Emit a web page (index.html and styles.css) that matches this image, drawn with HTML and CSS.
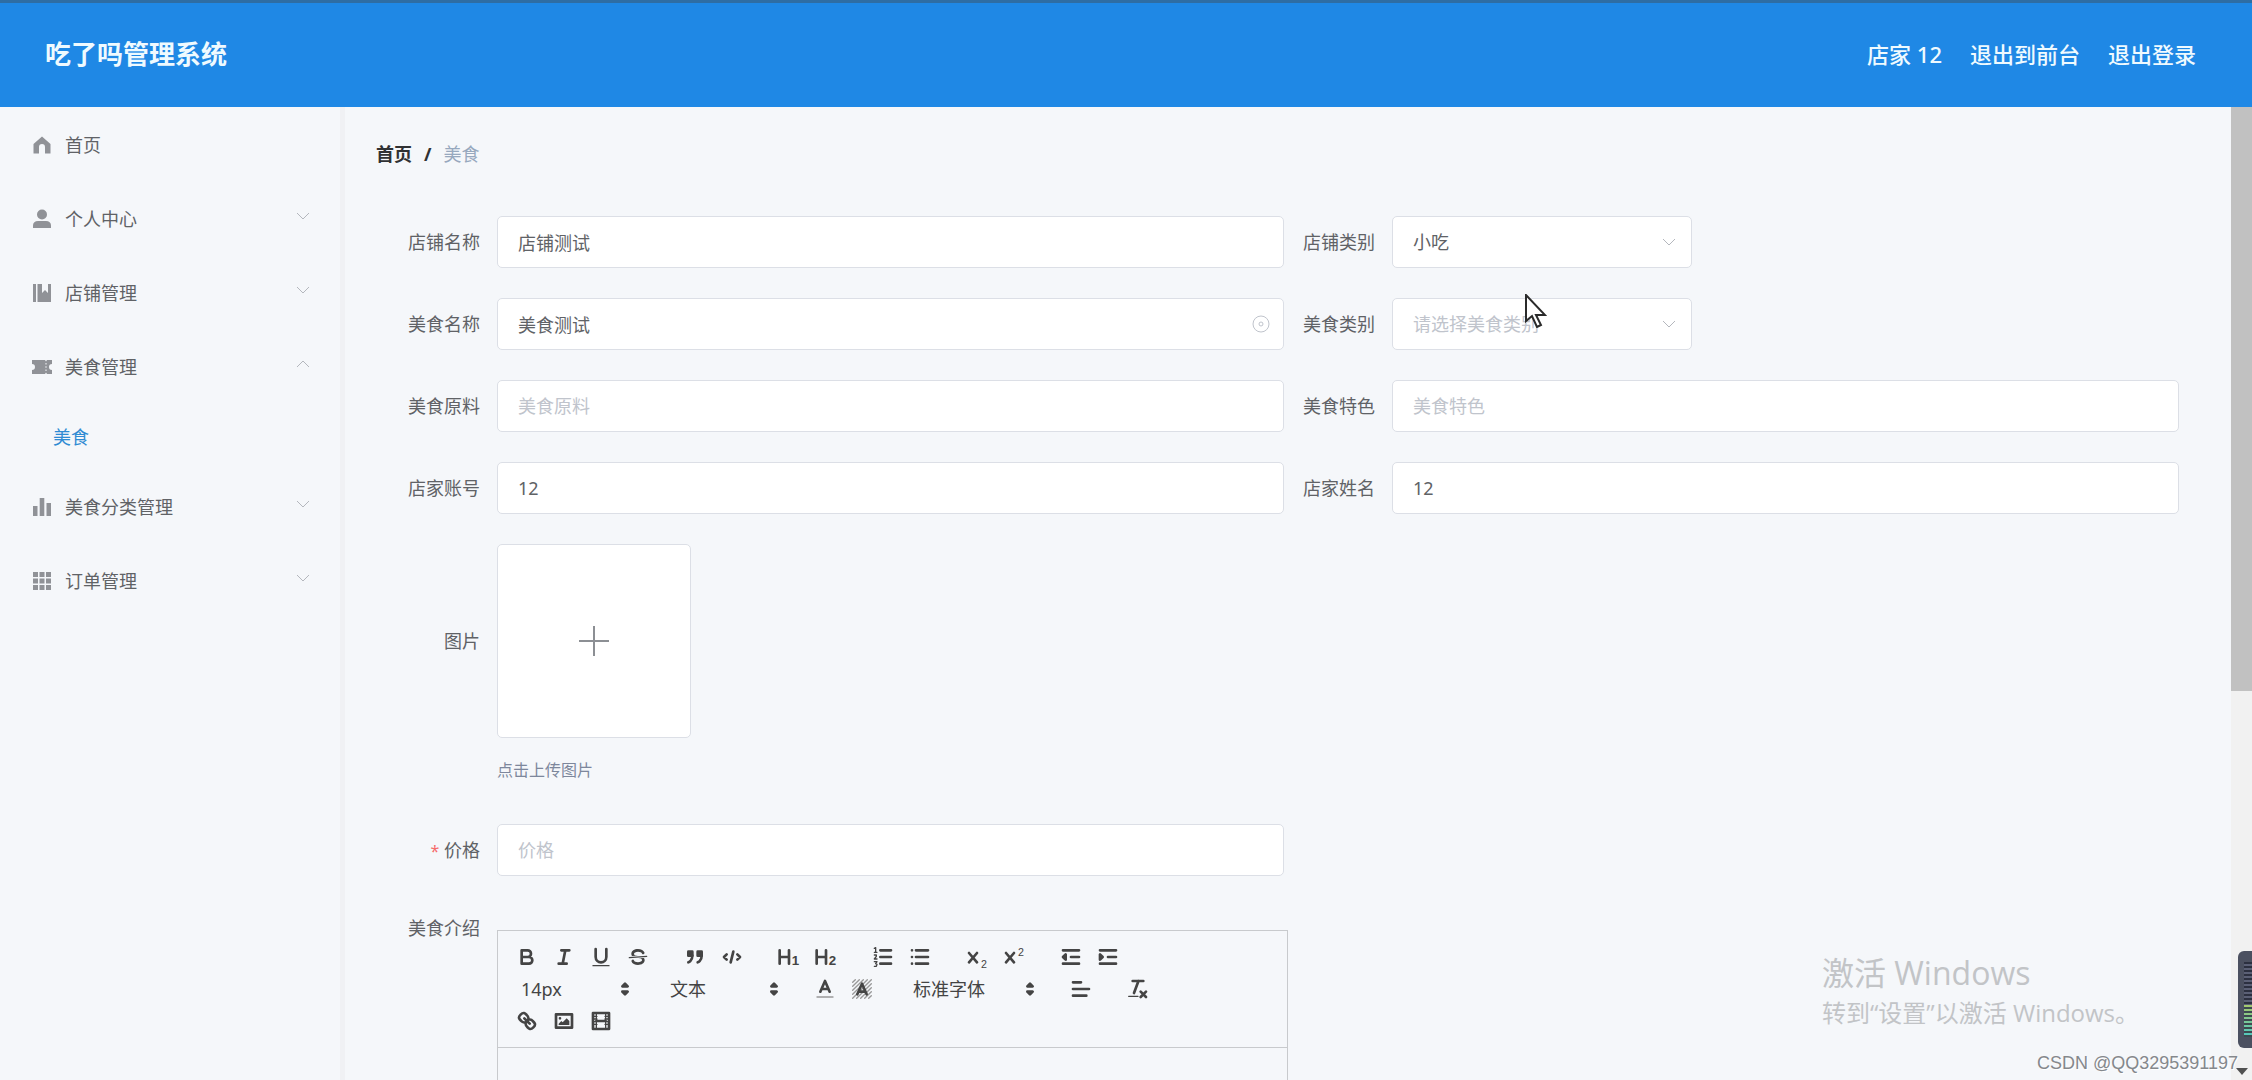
FILE: index.html
```html
<!DOCTYPE html>
<html lang="zh-CN">
<head>
<meta charset="utf-8">
<title>吃了吗管理系统</title>
<link rel="stylesheet" href="styles.css">
</head>
<body>
<header class="topbar">
  <h1 class="brand">吃了吗管理系统</h1>
  <nav class="topnav">
    <span>店家 12</span>
    <a href="#front">退出到前台</a>
    <a href="#logout">退出登录</a>
  </nav>
</header>

<div class="body">
  <aside class="sidebar">
    <ul class="menu">
      <li><a class="item" href="#home">
        <svg class="icon" viewBox="0 0 20 20"><path d="M10 1.500 18.500 9v9.500h-5.500V12a3 3 0 0 0-6 0v6.500H1.500V9z"/></svg>
        <span class="name">首页</span></a></li>
      <li><a class="item" href="#user">
        <svg class="icon" viewBox="0 0 20 20"><ellipse cx="10" cy="5.500" rx="5" ry="5"/><path d="M1 19v-2.500c0-3 2-4.500 5-4.500h8c3 0 5 1.500 5 4.500V19z"/></svg>
        <span class="name">个人中心</span>
        <svg class="arrow" viewBox="0 0 14 14"><path d="M1 4l6 6 6-6"/></svg></a></li>
      <li><a class="item" href="#shop">
        <svg class="icon" viewBox="0 0 20 20"><path d="M1 1h3v18H1zM5.500 1H10v9l3-3 3 3V1h3v18H5.500z"/></svg>
        <span class="name">店铺管理</span>
        <svg class="arrow" viewBox="0 0 14 14"><path d="M1 4l6 6 6-6"/></svg></a></li>
      <li><a class="item" href="#food">
        <svg class="icon" viewBox="0 0 20 20"><path d="M0 3h13l1 1.500L15 3h5v4a3 3 0 0 0 0 6v4h-5l-1-1.500L13 17H0v-4a3 3 0 0 0 0-6z"/><path class="cut" d="M14 6v1.500M14 9.200v1.600M14 12.500V14"/></svg>
        <span class="name">美食管理</span>
        <svg class="arrow" viewBox="0 0 14 14"><path d="M1 10l6-6 6 6"/></svg></a>
        <a class="subitem" href="#food-list">美食</a></li>
      <li><a class="item" href="#category">
        <svg class="icon" viewBox="0 0 20 20"><path d="M1 9h4.500v10H1zM7.700 1h4.600v18H7.700zM14.500 6H19v13h-4.500z"/></svg>
        <span class="name">美食分类管理</span>
        <svg class="arrow" viewBox="0 0 14 14"><path d="M1 4l6 6 6-6"/></svg></a></li>
      <li><a class="item" href="#orders">
        <svg class="icon" viewBox="0 0 20 20"><path d="M1 1h5v5H1zM7.500 1h5v5h-5zM14 1h5v5h-5zM1 7.500h5v5H1zM7.500 7.500h5v5h-5zM14 7.500h5v5h-5zM1 14h5v5H1zM7.500 14h5v5h-5zM14 14h5v5h-5z"/></svg>
        <span class="name">订单管理</span>
        <svg class="arrow" viewBox="0 0 14 14"><path d="M1 4l6 6 6-6"/></svg></a></li>
    </ul>
  </aside>

  <main class="main">
    <nav class="crumbs"><a href="#home">首页</a><span class="slash">/</span><span class="current">美食</span></nav>

    <form class="form">
      <div class="field">
        <label for="shop-name">店铺名称</label>
        <input class="control" id="shop-name" type="text" value="店铺测试">
      </div>
      <div class="field">
        <label for="shop-type">店铺类别</label>
        <div class="select">
          <select class="control" id="shop-type"><option>小吃</option></select>
          <svg class="arrow" viewBox="0 0 14 14"><path d="M1 4l6 6 6-6"/></svg>
        </div>
      </div>

      <div class="field">
        <label for="food-name">美食名称</label>
        <div class="clearable">
          <input class="control" id="food-name" type="text" value="美食测试">
          <svg class="clear" viewBox="0 0 18 18"><circle cx="9" cy="9" r="8"/><circle cx="9" cy="9" r="2"/></svg>
        </div>
      </div>
      <div class="field">
        <label for="food-type">美食类别</label>
        <div class="select">
          <select class="control empty" id="food-type"><option>请选择美食类别</option></select>
          <svg class="arrow" viewBox="0 0 14 14"><path d="M1 4l6 6 6-6"/></svg>
          <svg class="pointer" viewBox="0 0 22 34"><path d="M1 1v26l6-5 5 11 4-2-5-10h9z"/></svg>
        </div>
      </div>

      <div class="field">
        <label for="material">美食原料</label>
        <input class="control" id="material" type="text" placeholder="美食原料">
      </div>
      <div class="field">
        <label for="feature">美食特色</label>
        <input class="control" id="feature" type="text" placeholder="美食特色">
      </div>

      <div class="field">
        <label for="account">店家账号</label>
        <input class="control" id="account" type="text" value="12">
      </div>
      <div class="field">
        <label for="owner">店家姓名</label>
        <input class="control" id="owner" type="text" value="12">
      </div>

      <div class="field wide">
        <label class="tall" for="upload">图片</label>
        <div class="upload">
          <button class="upload-box" id="upload" type="button" aria-label="上传图片">
            <svg viewBox="0 0 32 32"><path d="M16 1v30M1 16h30"/></svg>
          </button>
          <p class="hint">点击上传图片</p>
        </div>
      </div>

      <div class="field first-column">
        <label for="price"><span class="required">*</span> 价格</label>
        <input class="control" id="price" type="text" placeholder="价格">
      </div>

      <div class="field first-column">
        <label class="short" id="intro-label">美食介绍</label>
        <div class="editor">
          <div class="toolbar">
            <div class="group">
              <button type="button" aria-label="加粗"><svg viewBox="0 0 18 18"><path d="M5 4h4.500a2.500 2.500 0 0 1 0 5H5zM5 9h5.500a2.500 2.500 0 0 1 0 5H5z"/></svg></button>
              <button type="button" aria-label="斜体"><svg viewBox="0 0 18 18"><path d="M7 4h6M5 14h6M8 14l2-10"/></svg></button>
              <button type="button" aria-label="下划线"><svg viewBox="0 0 18 18"><path d="M5 3v6a4 4 0 0 0 8 0V3"/><path class="thin" d="M3 15.500h12"/></svg></button>
              <button type="button" aria-label="删除线"><svg viewBox="0 0 18 18"><path class="thin" d="M15.500 8.500l-13 1"/><path class="solid" d="M9.007 8C6.542 7.791 6 7.519 6 6.500 6 5.792 7.283 5 9 5c1.571 0 2.765.679 2.969 1.309a1 1 0 0 0 1.900-.617C13.356 4.106 11.354 3 9 3 6.200 3 4 4.538 4 6.500a3.200 3.200 0 0 0 .5 1.843zM8.984 10C11.457 10.208 12 10.479 12 11.500c0 .708-1.283 1.500-3 1.500-1.571 0-2.765-.679-2.969-1.309a1 1 0 1 0-1.900.617C4.644 13.894 6.646 15 9 15c2.800 0 5-1.538 5-3.500a3.200 3.200 0 0 0-.5-1.843z"/></svg></button>
            </div>
            <div class="group">
              <button type="button" aria-label="引用"><svg viewBox="0 0 18 18"><g class="both"><path d="M4 5h3v3H4zM11 5h3v3h-3z"/><path d="M7 8c0 4.031-3 5-3 5M14 8c0 4.031-3 5-3 5"/></g></svg></button>
              <button type="button" aria-label="代码"><svg viewBox="0 0 18 18"><path d="M5 7L3 9l2 2M13 7l2 2-2 2M10 5L8 13"/></svg></button>
            </div>
            <div class="group">
              <button type="button" aria-label="标题一"><svg viewBox="0 0 18 18"><path d="M2 4v10M9 4v10M2 9h7"/><text x="11" y="15" font-size="10">1</text></svg></button>
              <button type="button" aria-label="标题二"><svg viewBox="0 0 18 18"><path d="M2 4v10M9 4v10M2 9h7"/><text x="11" y="15" font-size="10">2</text></svg></button>
            </div>
            <div class="group">
              <button type="button" aria-label="有序列表"><svg viewBox="0 0 18 18"><path d="M7 4h8M7 9h8M7 14h8"/><path class="thin" d="M2.500 2.500l1-.5v3.500M2.500 5.500h2M2.500 7.500h1.500v1l-1.500 2h2M2.500 12.500h2l-1 1.500 1 .5-.5 1.500h-1.500"/></svg></button>
              <button type="button" aria-label="无序列表"><svg viewBox="0 0 18 18"><path d="M6 4h9M6 9h9M6 14h9M3 4h0M3 9h0M3 14h0"/></svg></button>
            </div>
            <div class="group">
              <button type="button" aria-label="下标"><svg viewBox="0 0 18 18"><path d="M3 6l6 7M9 6l-6 7"/><text class="light" x="12" y="17" font-size="8">2</text></svg></button>
              <button type="button" aria-label="上标"><svg viewBox="0 0 18 18"><path d="M3 6l6 7M9 6l-6 7"/><text class="light" x="12" y="8" font-size="8">2</text></svg></button>
            </div>
            <div class="group">
              <button type="button" aria-label="减少缩进"><svg viewBox="0 0 18 18"><path d="M3 4h12M3 14h12M9 9h6"/><path class="both" d="M5 7v4L3 9z"/></svg></button>
              <button type="button" aria-label="增加缩进"><svg viewBox="0 0 18 18"><path d="M3 4h12M3 14h12M9 9h6"/><path class="both" d="M3 7v4l2-2z"/></svg></button>
            </div>
            <div class="group picker">
              <select aria-label="字号"><option>14px</option></select>
              <svg viewBox="0 0 18 18"><path class="both" d="M7 11l2 2 2-2zM7 7l2-2 2 2z"/></svg>
            </div>
            <div class="group picker">
              <select aria-label="段落"><option>文本</option></select>
              <svg viewBox="0 0 18 18"><path class="both" d="M7 11l2 2 2-2zM7 7l2-2 2 2z"/></svg>
            </div>
            <div class="group">
              <button type="button" aria-label="文字颜色"><svg viewBox="0 0 18 18"><path d="M5.500 11L9 3l3.500 8M6.400 9h5.200"/><path class="thin pale" d="M3 15h12"/></svg></button>
              <button type="button" aria-label="背景颜色"><svg viewBox="0 0 18 18"><path class="thin pale" d="M2 4l2-2M2 7l5-5M2 10l8-8M2 13l11-11M2 16l14-14M5 16l11-11M8 16l8-8M11 16l5-5M14 16l2-2"/><path d="M5.500 13L9 5l3.500 8M6.400 11h5.200"/></svg></button>
            </div>
            <div class="group picker font">
              <select aria-label="字体"><option>标准字体</option></select>
              <svg viewBox="0 0 18 18"><path class="both" d="M7 11l2 2 2-2zM7 7l2-2 2 2z"/></svg>
            </div>
            <div class="group">
              <button type="button" aria-label="对齐"><svg viewBox="0 0 18 18"><path d="M3 4h6M3 9h12M3 14h10"/></svg></button>
            </div>
            <div class="group">
              <button type="button" aria-label="清除格式"><svg viewBox="0 0 18 18"><path d="M5 3h8M6 12l3.350-9M11 11l4 4M15 11l-4 4"/><path class="thin" d="M2 14.500h7"/></svg></button>
            </div>
            <div class="group">
              <button type="button" aria-label="链接"><svg viewBox="0 0 18 18"><path d="M7 7l4 4M8.900 4.577a3.476 3.476 0 0 1 .36 4.679A3.476 3.476 0 0 1 4.577 8.900C3.185 7.500 2.035 6.400 4.217 4.217S7.500 3.185 8.900 4.577zM13.423 9.100a3.476 3.476 0 0 0-4.679-.36 3.476 3.476 0 0 0 .36 4.679c1.392 1.392 2.500 2.542 4.679.36S14.815 10.500 13.423 9.100z"/></svg></button>
              <button type="button" aria-label="图片"><svg viewBox="0 0 18 18"><path d="M3 4h12v10H3z"/><path class="solid" d="M5 12v-1l2-2 1 1 3-3 2 2v3zM5 7a1 1 0 1 1 2 0 1 1 0 0 1-2 0z"/></svg></button>
              <button type="button" aria-label="视频"><svg viewBox="0 0 18 18"><path d="M3 3h12v12H3z"/><path class="thin" d="M5.500 3v12M12.500 3v12M5 8.500h8M5 9.500h8M3 5.500h3M3 7.500h3M3 9.500h3M3 11.500h3M12 5.500h3M12 7.500h3M12 9.500h3M12 11.500h3"/></svg></button>
            </div>
          </div>
          <div class="content" contenteditable="true" role="textbox" aria-labelledby="intro-label"></div>
        </div>
      </div>
    </form>
  </main>

  <div class="scrollbar">
    <div class="thumb"></div>
    <svg class="down" viewBox="0 0 12 7"><path d="M0 0h12L6 7z"/></svg>
  </div>
</div>

<div class="activate">
  <p class="activate-title">激活 Windows</p>
  <p class="activate-text">转到“设置”以激活 Windows。</p>
</div>
<div class="meter"><div class="meter-idle"></div><div class="meter-level"></div></div>
<p class="credit">CSDN @QQ3295391197</p>
</body>
</html>
```

FILE: styles.css
```css
* {
  box-sizing: border-box;
}

body {
  margin: 0;
  height: 100vh;
  overflow: hidden;
  display: flex;
  flex-direction: column;
  position: relative;
  background: #f5f7fa;
  color: #606266;
  font: 18px/24px "Noto Sans", "Noto Sans CJK SC", sans-serif;
}

a {
  color: inherit;
  text-decoration: none;
}

p,
ul,
h1 {
  margin: 0;
  padding: 0;
}

ul {
  list-style: none;
}

/* header */
.topbar {
  flex: none;
  height: 107px;
  padding: 0 56px 2px 45px;
  border-top: 3px solid #2e6da3;
  background: #1f88e5;
  color: #effaff;
  display: flex;
  align-items: center;
  justify-content: space-between;
}

.brand {
  font-size: 26px;
  line-height: 36px;
  font-weight: 700;
}

.topnav {
  display: flex;
  gap: 28px;
  font-size: 22px;
  line-height: 32px;
  font-weight: 500;
}

.body {
  flex: 1;
  min-height: 0;
  display: flex;
}

/* side menu */
.sidebar {
  flex: none;
  width: 345px;
  padding-top: 1px;
  border-right: 5px solid #f0f1f4;
}

.item {
  height: 74px;
  padding: 0 30px 0 32px;
  display: flex;
  align-items: center;
  gap: 13px;
}

.icon {
  width: 20px;
  height: 20px;
  fill: #909297;
}

.icon .cut {
  stroke: #f5f7fa;
  stroke-width: 1;
}

.name {
  flex: 1;
}

.arrow {
  width: 14px;
  height: 14px;
  fill: none;
  stroke: #b4b7bd;
  stroke-width: 1;
}

.item .arrow {
  margin-bottom: 6px;
}

.subitem {
  display: block;
  padding-left: 53px;
  line-height: 66px;
  color: #2f8bd3;
}

/* page */
.main {
  flex: 1;
  min-width: 0;
  overflow: hidden;
  padding: 35px 52px 0 31px;
}

.crumbs {
  display: flex;
  line-height: 24px;
}

.crumbs a {
  color: #303133;
  font-weight: 700;
}

.slash {
  margin: 0 12px;
  color: #303133;
  font-weight: 700;
}

.current {
  color: #97a8be;
}

.form {
  margin: 50px 0 0 13px;
  display: grid;
  grid-template-columns: 1fr 1fr;
  gap: 30px 0;
}

.field {
  display: grid;
  grid-template-columns: 108px 1fr;
}

.wide {
  grid-column: 1 / 3;
}

.first-column {
  grid-column: 1;
}

label {
  padding-right: 17px;
  text-align: right;
  line-height: 52px;
}

.tall {
  line-height: 194px;
}

.short {
  line-height: 42px;
}

.required {
  color: #f56c6c;
  font-size: 16px;
}

.control {
  width: 100%;
  height: 52px;
  padding: 0 20px;
  border: 1px solid #dcdfe6;
  border-radius: 5px;
  background: #fff;
  color: #606266;
  font: inherit;
  appearance: none;
  outline: none;
}

.control::placeholder,
.empty {
  color: #c0c4cc;
  opacity: 1;
}

.select,
.clearable {
  display: grid;
  align-items: center;
  position: relative;
}

.select {
  width: 300px;
}

.select > *,
.clearable > * {
  grid-area: 1 / 1;
}

.select .arrow {
  justify-self: end;
  margin-right: 16px;
}

.clear {
  width: 18px;
  height: 18px;
  justify-self: end;
  margin-right: 14px;
  fill: none;
  stroke: #c0c4cc;
  stroke-width: 1;
}

.pointer {
  position: absolute;
  left: 133px;
  top: -4px;
  width: 22px;
  height: 34px;
  fill: #fff;
  stroke: #2b2b2b;
  stroke-width: 2;
}

.upload-box {
  width: 194px;
  height: 194px;
  display: grid;
  place-items: center;
  border: 1px solid #dcdfe6;
  border-radius: 5px;
  background: #fff;
}

.upload-box svg {
  width: 32px;
  height: 32px;
  fill: none;
  stroke: #8c8f94;
  stroke-width: 2;
}

.hint {
  margin-top: 20px;
  padding-bottom: 12px;
  font-size: 16px;
  line-height: 24px;
  color: #7d879c;
}

/* rich text editor */
.editor {
  margin: 23px -4px 0 0;
  border: 1px solid #c8cacd;
}

.toolbar {
  padding: 10px 10px 10px 10px;
  border-bottom: 1px solid #c8cacd;
  display: flex;
  flex-wrap: wrap;
}

.group {
  display: flex;
  margin-right: 20px;
}

.toolbar button {
  width: 37px;
  height: 32px;
  padding: 0;
  border: 0;
  background: none;
  display: grid;
  place-items: center;
}

.toolbar svg {
  width: 24px;
  height: 24px;
  fill: none;
  stroke: #444;
  stroke-width: 2;
  stroke-linecap: round;
  stroke-linejoin: round;
}

.toolbar .thin {
  stroke-width: 1;
}

.toolbar .pale {
  stroke: #999;
}

.toolbar .both {
  fill: #444;
}

.toolbar .solid,
.toolbar text {
  fill: #444;
  stroke: none;
}

.toolbar text {
  font-weight: 700;
}

.toolbar .light {
  font-weight: 400;
}

.picker {
  width: 129px;
  height: 32px;
  display: grid;
  align-items: center;
}

.picker > * {
  grid-area: 1 / 1;
}

.picker svg {
  justify-self: end;
}

.picker select {
  width: 100%;
  height: 32px;
  padding: 0 0 0 13px;
  border: 0;
  background: none;
  color: #444;
  font: inherit;
  appearance: none;
}

.font {
  width: 142px;
}

.content {
  min-height: 260px;
}

/* page scroll bar */
.scrollbar {
  flex: none;
  width: 21px;
  background: #f1f1f1;
  display: flex;
  flex-direction: column;
  align-items: center;
  justify-content: space-between;
}

.thumb {
  width: 100%;
  height: 60%;
  background: #c1c1c1;
}

.down {
  width: 12px;
  height: 7px;
  margin-bottom: 5px;
  fill: #505050;
}

/* desktop overlays */
.activate {
  position: absolute;
  right: 102px;
  bottom: 49px;
  width: 328px;
  color: #c2c4c7;
  white-space: nowrap;
  font-family: "Open Sans", "Noto Sans CJK SC", sans-serif;
}

.activate-title {
  font-size: 32px;
  line-height: 44px;
}

.activate-text {
  font-size: 24px;
  line-height: 36px;
}

.meter {
  position: absolute;
  right: 0;
  bottom: 32px;
  width: 14px;
  height: 97px;
  padding: 11px 0 11px 6px;
  border-radius: 6px 0 0 6px;
  background: #4b5060;
  display: flex;
  flex-direction: column;
}

.meter-idle {
  flex: 4;
  background: repeating-linear-gradient(#2c3040 0 2px, #5b6076 2px 4px);
}

.meter-level {
  flex: 3;
  background: repeating-linear-gradient(transparent 0 2px, #3d4a50 2px 4px), linear-gradient(#a5c96e, #4fc7c0);
}

.credit {
  position: absolute;
  right: 14px;
  bottom: 5px;
  font: 18px/24px "Liberation Sans", sans-serif;
  color: #85888c;
  text-shadow: 1px 1px 0 #fff;
}
```
